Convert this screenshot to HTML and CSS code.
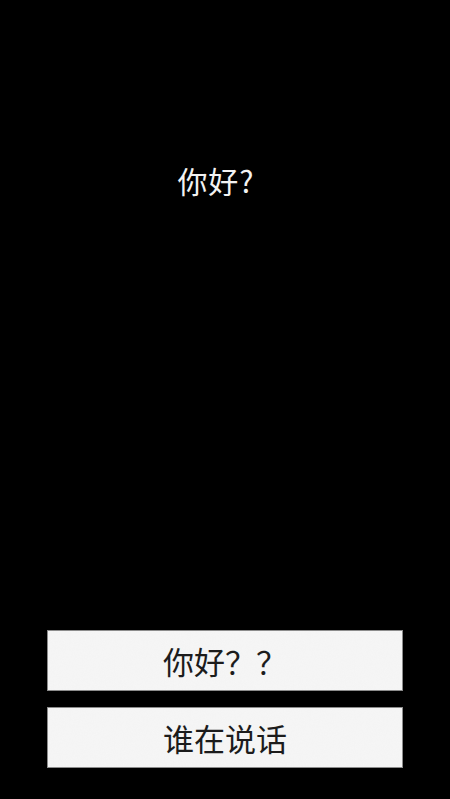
FILE: index.html
```html
<!DOCTYPE html>
<html lang="zh-CN">
<head>
<meta charset="utf-8">
<link rel="stylesheet" href="styles.css">
</head>
<body>
<div class="screen">
  <div class="title">你好?</div>
  <div class="choices">
    <div class="choice">你好？？</div>
    <div class="choice">谁在说话</div>
  </div>
</div>
</body>
</html>
```
FILE: styles.css
```css
html, body {
  margin: 0;
  padding: 0;
  background: #000;
}
.screen {
  width: 450px;
  height: 799px;
  display: flex;
  flex-direction: column;
  align-items: center;
  font-family: "Noto Sans CJK SC", "Noto Sans", sans-serif;
  box-sizing: border-box;
  padding-bottom: 31px;
}
.title {
  margin-top: 158px;
  padding-right: 18px;
  color: #f2f2f2;
  font-size: 30px;
  line-height: 44px;
  letter-spacing: 1px;
}
.choices {
  margin-top: auto;
  display: flex;
  flex-direction: column;
  gap: 16px;
}
.choice {
  width: 356px;
  height: 61px;
  box-sizing: border-box;
  background-color: #f6f6f6;
  background-image: url("data:image/svg+xml,%3Csvg xmlns='http://www.w3.org/2000/svg' width='120' height='120'%3E%3Cfilter id='n'%3E%3CfeTurbulence type='fractalNoise' baseFrequency='0.9' numOctaves='2' stitchTiles='stitch'/%3E%3CfeColorMatrix values='0 0 0 0 0.5 0 0 0 0 0.5 0 0 0 0 0.5 0 0 0 0.04 0'/%3E%3C/filter%3E%3Crect width='120' height='120' filter='url(%23n)'/%3E%3C/svg%3E");
  border: 1px solid #8c8c8c;
  color: #1c1c1c;
  font-size: 31px;
  display: flex;
  align-items: center;
  justify-content: center;
}
```
